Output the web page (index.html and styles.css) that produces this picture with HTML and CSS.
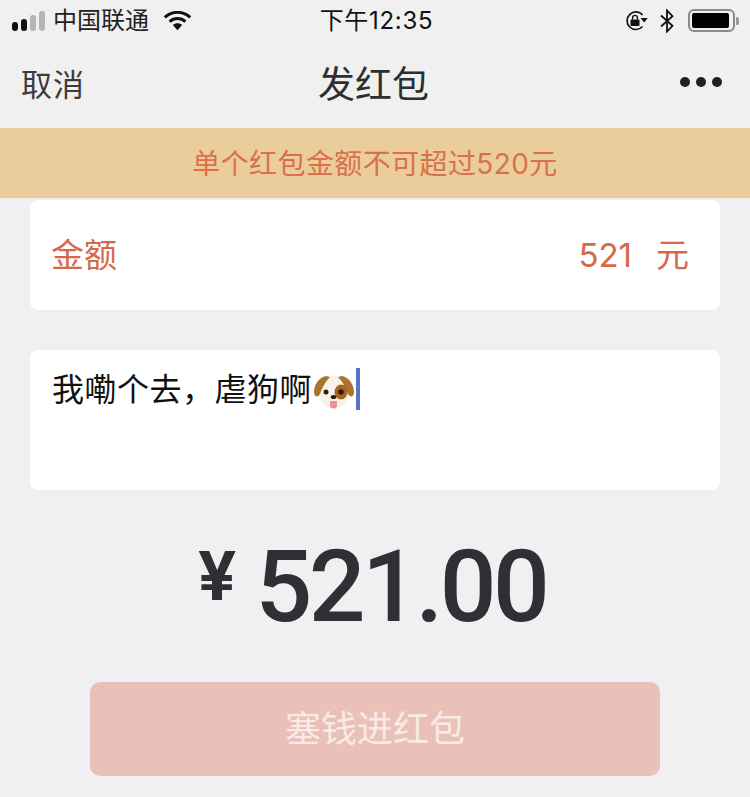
FILE: index.html
```html
<!DOCTYPE html>
<html lang="zh-CN">
<head>
  <meta charset="UTF-8" />
  <title>发红包</title>
  <link rel="stylesheet" href="styles.css">
</head>
<body>
  <div class="status-bar">
    <div class="status-left">
      <div class="signal"><i></i><i></i><i class="dim"></i><i class="dim"></i></div>
      <span class="carrier">中国联通</span>
      <svg class="wifi" width="29" height="20" viewBox="0 0 30 20">
        <path d="M15 19.5 L10.2 14.2 C12.8 11.8 17.2 11.8 19.8 14.2 Z" fill="#111"/>
        <path d="M6.8 10.6 C11.4 6.4 18.6 6.4 23.2 10.6" fill="none" stroke="#111" stroke-width="3"/>
        <path d="M1.8 6.2 C9.5 -0.8 20.5 -0.8 28.2 6.2" fill="none" stroke="#111" stroke-width="3"/>
      </svg>
    </div>
    <div class="clock">下午12:35</div>
    <div class="status-right">
      <svg class="rotation-lock" width="23" height="20" viewBox="0 0 23 20">
        <path d="M17.5 15.5 A8.8 8.8 0 1 1 17.6 4" fill="none" stroke="#111" stroke-width="1.7"/>
        <path d="M15.5 7 L22.8 7 L19.2 11.5 Z" fill="#111"/>
        <rect x="5.5" y="8.5" width="9" height="6.5" rx="1" fill="#111"/>
        <path d="M7.6 8.5 V6.8 A2.4 2.4 0 0 1 12.4 6.8 V8.5" fill="none" stroke="#111" stroke-width="1.4"/>
      </svg>
      <svg class="bluetooth" width="14" height="24" viewBox="0 0 14 24">
        <path d="M1 6.5 L12.5 16.8 L7 22.5 V1.5 L12.5 7.2 L1 17.5" fill="none" stroke="#111" stroke-width="1.8"/>
      </svg>
      <div class="battery"><div class="battery-fill"></div></div>
      <div class="battery-tip"></div>
    </div>
  </div>

  <div class="nav-bar">
    <span class="nav-cancel">取消</span>
    <span class="nav-title">发红包</span>
    <div class="nav-more"><i></i><i></i><i></i></div>
  </div>

  <div class="notice">单个红包金额不可超过520元</div>

  <div class="amount-row">
    <span class="amount-label">金额</span>
    <span class="amount-value"><span>521</span><span>元</span></span>
  </div>

  <div class="message-box">
    <span class="message-text">我嘞个去，虐狗啊</span>
    <svg class="dog" width="40" height="34" viewBox="0 0 40 34">
      <ellipse cx="20" cy="17" rx="15" ry="16.5" fill="#f8f2e8"/>
      <path d="M12 1 C5 2 0 10 0 17 C0 22 4 23 6 19 C8 14 10 8 16 2 Z" fill="#a9742c"/>
      <path d="M28 1 C35 2 40 10 40 17 C40 22 36 23 34 19 C32 14 30 8 24 2 Z" fill="#a9742c"/>
      <ellipse cx="27" cy="17" rx="6.5" ry="7.5" fill="#a9651f"/>
      <circle cx="12" cy="17" r="2.5" fill="#2a1c14"/>
      <circle cx="27" cy="17" r="2.8" fill="#2a1c14"/>
      <ellipse cx="19.5" cy="22" rx="2.8" ry="2" fill="#2a1c14"/>
      <path d="M16 26 H23 V30 A3.5 3.5 0 0 1 16 30 Z" fill="#ee8f9c"/>
    </svg>
    <span class="caret"></span>
  </div>

  <div class="total">
    <span class="yen">¥</span>
    <span class="total-value">521.00</span>
  </div>

  <div class="submit">塞钱进红包</div>
</body>
</html>
```

FILE: styles.css
```css
html, body { margin: 0; padding: 0; }
body { width: 750px; height: 797px; overflow: hidden; background: #f0f0f2; color: #111; font-family: "Inter", "Noto Sans CJK SC", "Liberation Sans", sans-serif; }

.status-bar { height: 42px; box-sizing: border-box; padding: 0 11px 1px 12px; display: grid; grid-template-columns: 1fr auto 1fr; align-items: center; background: #f0f0f0; }
.status-left { display: flex; align-items: center; }
.signal { display: flex; align-items: flex-end; gap: 3px; height: 20px; }
.signal i { width: 6px; background: #111; border-radius: 3px; }
.signal i:nth-child(1) { height: 9px; }
.signal i:nth-child(2) { height: 12px; }
.signal i:nth-child(3) { height: 16px; }
.signal i:nth-child(4) { height: 20px; }
.signal i.dim { background: #b5b5b5; }
.carrier { font-size: 24px; line-height: 28px; margin-left: 8px; color: #222; }
.wifi { margin-left: 14px; }
.clock { font-size: 24px; line-height: 28px; letter-spacing: 0.7px; margin-left: 2px; color: #111; }
.status-right { display: flex; align-items: center; justify-content: flex-end; }
.bluetooth { margin-left: 12px; }
.battery { margin-left: 14px; width: 47px; height: 23px; box-sizing: border-box; padding: 2px; border: 2px solid #8a8a8a; border-radius: 6px; }
.battery-fill { height: 100%; width: 37px; background: #000; border-radius: 2px; }
.battery-tip { width: 3px; height: 8px; margin-left: 1px; background: #9a9a9a; border-radius: 0 2px 2px 0; }

.nav-bar { height: 86px; box-sizing: border-box; padding: 0 28px 6px 21px; display: grid; grid-template-columns: 1fr auto 1fr; align-items: center; background: #f0f0f0; }
.nav-cancel { font-size: 31px; letter-spacing: 1px; color: #3c3c3c; }
.nav-title { font-size: 37px; margin-left: 4px; color: #2e2e2e; }
.nav-more { display: flex; justify-content: flex-end; gap: 6px; }
.nav-more i { width: 10px; height: 10px; background: #222; border-radius: 50%; }

.notice { height: 70px; line-height: 72px; background: #ebcd9b; color: #d9714b; font-size: 28px; letter-spacing: 0.4px; text-align: center; }

.amount-row { height: 110px; margin: 2px 30px 0; padding: 0 31px 4px 21px; box-sizing: border-box; display: flex; justify-content: space-between; align-items: center; background: #fff; border-radius: 8px; color: #d5694a; font-size: 33px; }
.amount-value { display: flex; align-items: baseline; gap: 24px; }

.message-box { height: 140px; margin: 40px 30px 0; padding: 18px 22px 0; box-sizing: border-box; display: flex; align-items: flex-start; background: #fff; border-radius: 8px; color: #111; }
.message-text { font-size: 32px; line-height: 44px; letter-spacing: 0.5px; }
.dog { margin: 7px 0 0 2px; }
.caret { width: 4px; height: 42px; margin-left: 2px; background: #5b73c6; }

.total { margin-top: 44px; padding-right: 6px; display: flex; justify-content: center; align-items: flex-start; color: #302f33; font-family: "Roboto", "Liberation Sans", sans-serif; font-weight: 500; }
.yen { font-family: "Inter", sans-serif; font-size: 68px; line-height: 82px; margin-right: 19px; font-weight: 700; }
.total-value { margin-top: 3px; font-size: 100px; line-height: 100px; letter-spacing: -3.5px; }

.submit { height: 94px; line-height: 94px; margin: 45px 90px 0; background: #ebc0b9; border-radius: 10px; color: #f8ebe6; font-size: 36px; text-align: center; }
```
